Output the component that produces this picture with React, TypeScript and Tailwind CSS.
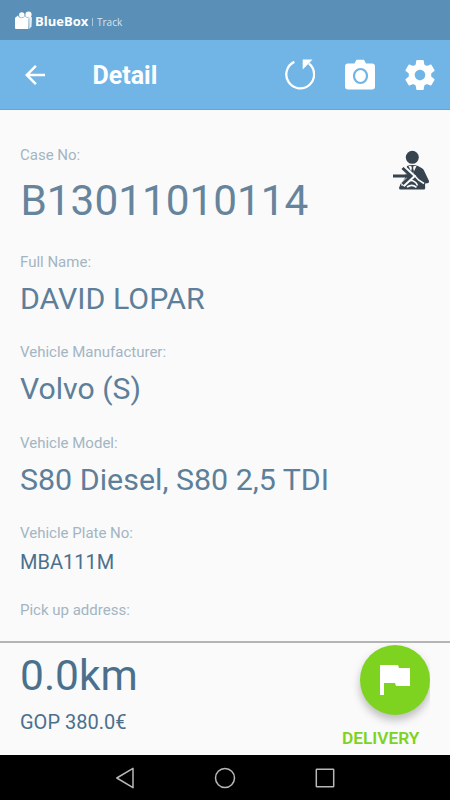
import React from "react";

type FieldProps = {
  label: string;
  value?: string;
  labelClass?: string;
  valueClass?: string;
};

function Field({ label, value, labelClass = "", valueClass = "" }: FieldProps) {
  return (
    <div>
      <div className={`text-[15px] leading-5 text-[#a3b5c3] ${labelClass}`}>{label}</div>
      {value && <div className={`whitespace-nowrap ${valueClass}`}>{value}</div>}
    </div>
  );
}

function BoxLogo() {
  return (
    <svg width="18" height="19" viewBox="0 0 18 19" fill="#fff">
      <circle cx="6.800" cy="4" r="2.700" />
      <circle cx="13.500" cy="3.700" r="3.100" />
      <path d="M13 5.500l4 .8L16.500 15.500l-2.300 2.500z" fill="#e4eff6" />
      <path d="M0 7.500q0-1 1-1.600L3 4.500q1 2.200 3.500 2.200T10 4.500q1 2 3.500 2.500V17q0 1-1 1H1q-1 0-1-1z" />
      <path d="M3.200 4.700q1 2 3.300 2T10 4.800q1.200 2 3.600 2" fill="none" stroke="#8fb6d2" strokeWidth=".7" />
      <path d="M14 7.500v10" stroke="#8fb6d2" strokeWidth=".8" />
    </svg>
  );
}

function HandoverIcon() {
  return (
    <svg width="38" height="40" viewBox="0 0 38 40">
      <circle cx="20.300" cy="7.300" r="6.500" fill="#36444f" />
      <path
        d="M15 16q5.500-2 11 0l4 2.200q1.500.8 2 2.300l5 10.500q.5 2-1.500 2.300l-2.500.2.200 4.500q0 1.500-1.500 1.500H8.500Q7 39.500 7 38l1.500-4 4.500-6z"
        fill="#36444f"
      />
      <path d="M16.500 16l4 8.500 4-8.500z" fill="#fafafa" />
      <path d="M19.200 16h2.400l-.5 2 .9 3.500-1.500 3-1.500-3 .9-3.500z" fill="#36444f" />
      <path
        d="M22.500 25.500l4 4.500 5.500 3.500M9.500 35.500q4-5 9-5t7 5M15 37q5-3.500 9.500.3"
        fill="none"
        stroke="#fafafa"
        strokeWidth="1.600"
      />
      <path d="M10.500 17l9.700 9-9.700 9" fill="none" stroke="#fafafa" strokeWidth="5.500" />
      <path d="M1 26h17M10.500 18l8.500 8-8.500 8" fill="none" stroke="#36444f" strokeWidth="3" />
    </svg>
  );
}

function ReloadIcon() {
  return (
    <svg width="30" height="31" viewBox="0 0 30 31">
      <path d="M9.300 2.900A13.900 13.900 0 1 0 24 4.700" fill="none" stroke="#fff" strokeWidth="2.300" />
      <path d="M17.700.5h9.800l-2.800 3-1 1-6 6z" fill="#fff" />
    </svg>
  );
}

function CameraIcon() {
  return (
    <svg width="30" height="31" viewBox="0 0 30 31">
      <path
        d="M8 4.500h1.500L11.500.8h7.500l2 3.700H27q3 0 3 3v20q0 3-3 3H3q-3 0-3-3v-20q0-3 3-3z"
        fill="#fff"
      />
      <ellipse cx="15.500" cy="17" rx="6.500" ry="7" fill="none" stroke="#70b5e5" strokeWidth="2.200" />
    </svg>
  );
}

function GearIcon() {
  return (
    <svg width="36" height="36" viewBox="0 0 24 24" fill="#fff">
      <path d="M19.430 12.980c.04-.32.07-.64.07-.98s-.03-.66-.07-.98l2.110-1.650c.19-.15.24-.42.12-.64l-2-3.460c-.12-.22-.39-.3-.61-.22l-2.490 1c-.52-.4-1.080-.73-1.690-.98l-.38-2.650C14.460 2.180 14.250 2 14 2h-4c-.25 0-.46.18-.49.42l-.38 2.650c-.61.25-1.170.59-1.690.98l-2.490-1c-.23-.09-.49 0-.61.22l-2 3.460c-.13.22-.07.49.12.64l2.110 1.650c-.04.32-.07.65-.07.98s.03.66.07.98l-2.110 1.650c-.19.15-.24.42-.12.64l2 3.460c.12.22.39.3.61.22l2.490-1c.52.4 1.080.73 1.690.98l.38 2.650c.03.24.24.42.49.42h4c.25 0 .46-.18.49-.42l.38-2.650c.61-.25 1.170-.59 1.690-.98l2.490 1c.23.09.49 0 .61-.22l2-3.460c.12-.22.07-.49-.12-.64l-2.110-1.650zM12 15.500c-1.930 0-3.500-1.570-3.500-3.500s1.570-3.500 3.500-3.500 3.500 1.570 3.500 3.500-1.570 3.500-3.500 3.500z" />
    </svg>
  );
}

export default function App() {
  return (
    <div className="flex h-[800px] w-[450px] flex-col overflow-hidden bg-[#fafafa] font-['Roboto',sans-serif]">
      <div className="flex h-10 items-center bg-[#5a90b8] pl-[15px] text-white">
        <BoxLogo />
        <span className="ml-[2px] mt-px w-[54px] whitespace-nowrap font-['Open_Sans',sans-serif] text-[13px] font-bold leading-4">
          BlueBox
        </span>
        <span className="ml-[3px] mt-[4px] h-2 w-px bg-[#a9c8df]" />
        <span className="ml-1 mt-[4px] font-['Open_Sans',sans-serif] text-[10px] leading-4 text-[#d6e5f0]">
          Track
        </span>
      </div>

      <header className="flex h-[70px] items-center border-b border-[#5caadb] bg-[#70b5e5] pl-5 text-white">
        <svg width="30" height="30" viewBox="0 0 24 24" fill="#fff">
          <path d="M20 11H7.830l5.590-5.590L12 4l-8 8 8 8 1.410-1.410L7.830 13H20v-2z" />
        </svg>
        <h1 className="ml-[42.500px] mt-[3px] text-[25px] font-bold leading-[30px]">Detail</h1>
        <div className="ml-auto flex items-center pr-3">
          <ReloadIcon />
          <span className="ml-[30px]">
            <CameraIcon />
          </span>
          <span className="ml-[27px]">
            <GearIcon />
          </span>
        </div>
      </header>

      <main className="flex h-[531px] justify-between pl-5 pr-5 pt-[35px]">
        <div className="flex flex-col">
          <Field
            label="Case No:"
            value="B13011010114"
            valueClass="mt-[11px] pl-[0.5px] text-[42.3px] leading-[50px] text-[#66859d]"
          />
          <Field
            label="Full Name:"
            value="DAVID LOPAR"
            labelClass="mt-[25.500px]"
            valueClass="mt-[9px] text-[30.3px] leading-9 text-[#5d7f99]"
          />
          <Field
            label="Vehicle Manufacturer:"
            value="Volvo (S)"
            labelClass="mt-[25.500px]"
            valueClass="mt-[9px] text-[30.2px] leading-9 text-[#5d7f99]"
          />
          <Field
            label="Vehicle Model:"
            value="S80 Diesel, S80 2,5 TDI"
            labelClass="mt-[25.500px]"
            valueClass="mt-[9px] text-[30.4px] leading-9 text-[#5d7f99]"
          />
          <Field
            label="Vehicle Plate No:"
            value="MBA111M"
            labelClass="mt-[25.500px]"
            valueClass="mt-[7px] text-[20px] leading-6 text-[#4b708d]"
          />
          <Field label="Pick up address:" labelClass="mt-[26px]" />
        </div>
        <div className="pt-[5px]">
          <HandoverIcon />
        </div>
      </main>

      <footer className="flex h-[114px] justify-between border-t-2 border-[#b4b4b4] pl-5">
        <div className="pt-2 text-[#4b708d]">
          <div className="text-[42.5px] leading-[50px]">0.0km</div>
          <div className="mt-[9px] text-[20px] leading-6">GOP 380.0€</div>
        </div>
        <div className="flex w-[108px] flex-col">
          <div className="flex h-[85px] w-[88px] justify-end overflow-hidden pt-[2px]">
            <button className="flex size-[70px] shrink-0 items-center justify-center rounded-full bg-[#7ed321] shadow-[0_5px_9px_rgba(0,0,0,0.25)]">
              <svg width="30" height="30" viewBox="0 0 30 30" fill="#fff">
                <path d="M0 0h18l1 3h11v18H16l-1-3H4v12H0z" />
              </svg>
            </button>
          </div>
          <span className="whitespace-nowrap text-[17.300px] font-semibold leading-5 text-[#7ed321]">DELIVERY</span>
        </div>
      </footer>

      <nav className="flex h-[45px] items-center justify-between bg-black pl-[115px] pr-[115px]">
        <svg width="20" height="22" viewBox="0 0 20 22" fill="none" stroke="#b8b8b8" strokeWidth="1.500">
          <path d="M18 1.300v19.400L1.800 11z" strokeLinejoin="round" />
        </svg>
        <svg width="22" height="22" viewBox="0 0 22 22" fill="none" stroke="#b8b8b8" strokeWidth="1.500">
          <circle cx="11" cy="11" r="9.500" />
        </svg>
        <svg width="20" height="20" viewBox="0 0 20 20" fill="none" stroke="#b8b8b8" strokeWidth="1.500">
          <rect x="1.300" y="1.300" width="17.400" height="17.400" rx=".5" />
        </svg>
      </nav>
    </div>
  );
}
